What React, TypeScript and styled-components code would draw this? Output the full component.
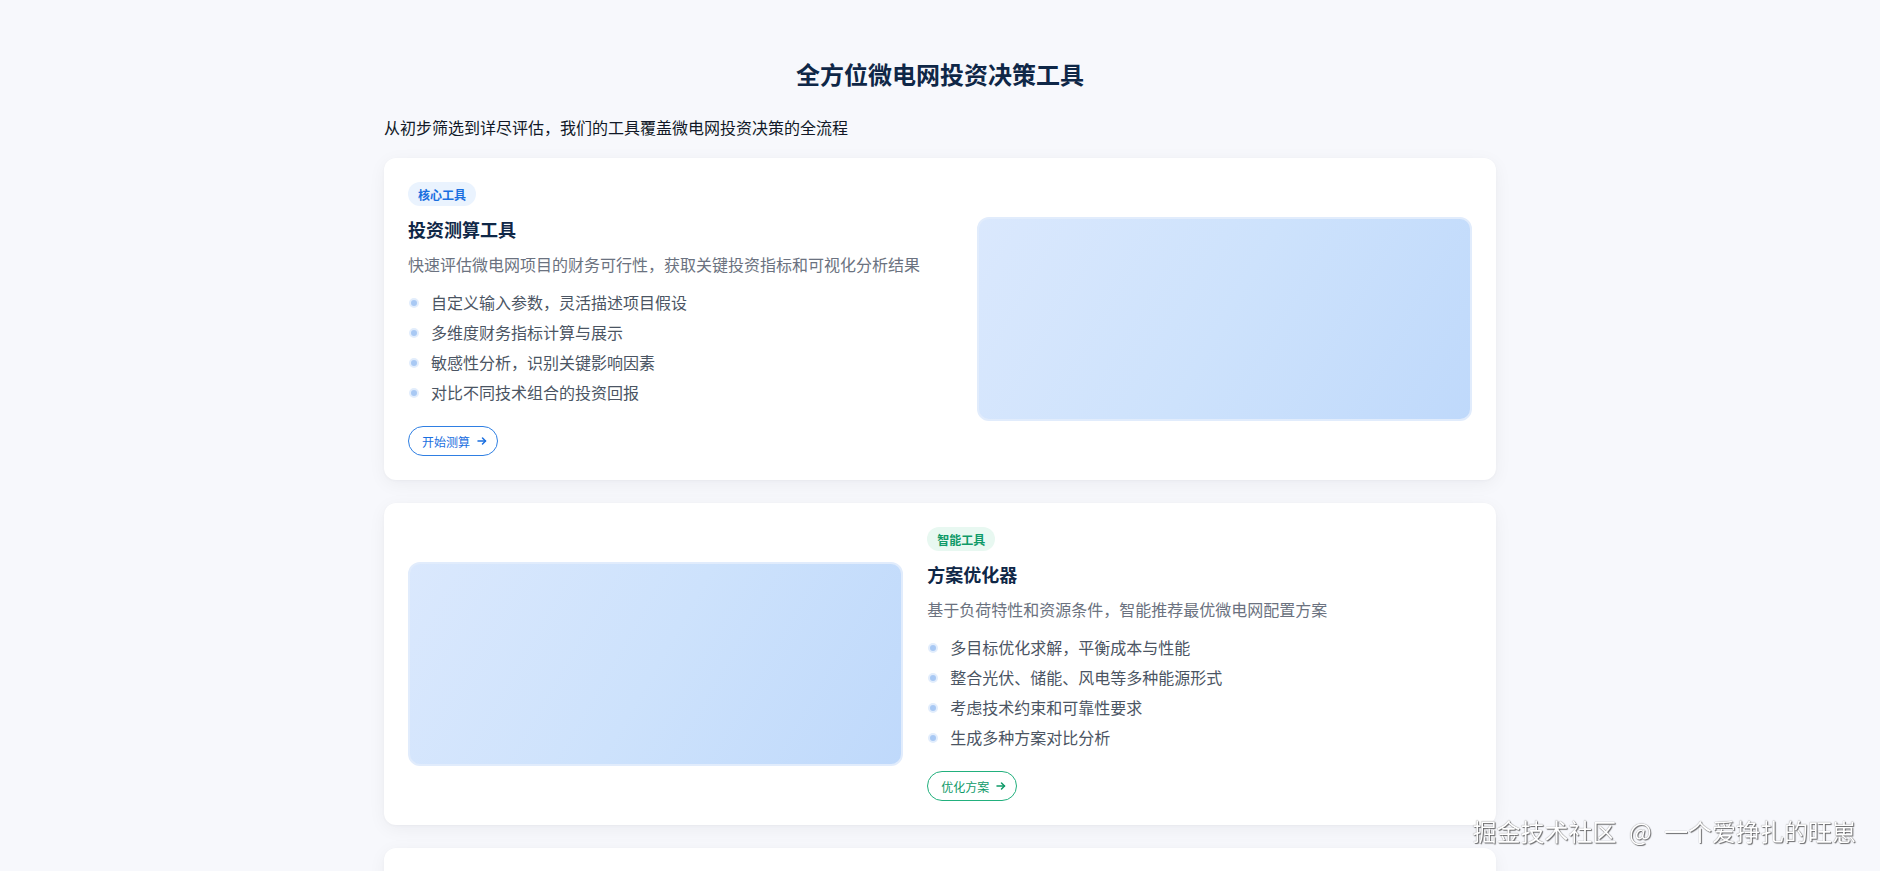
import React from "react";
import styled, { createGlobalStyle, css } from "styled-components";

const GlobalStyle = createGlobalStyle`
  html, body {
    margin: 0;
    padding: 0;
    overflow: hidden;
    background: #f7f8fc;
  }
  body {
    font-family: Inter, "Noto Sans CJK SC", "Noto Sans", sans-serif;
    color: #1f2937;
  }
  * { box-sizing: border-box; }
`;

type Tone = "blue" | "green";

const tones = {
  blue: { text: "#1a6fe0", bg: "#eaf3fe", border: "#2f7fe3" },
  green: { text: "#0f9a68", bg: "#e8f8f1", border: "#22b07d" },
};

const Page = styled.main`
  padding-top: 59px;
  min-height: 871px;
`;

const Container = styled.div`
  width: 1112px;
  margin: 0 auto;
`;

const Heading = styled.h2`
  margin: 0 0 23px;
  font-size: 24px;
  line-height: 34px;
  font-weight: 700;
  color: #0f2747;
  text-align: center;
`;

const Subtitle = styled.p`
  margin: 0 0 18px;
  font-size: 16px;
  line-height: 24px;
  color: #111827;
`;

const CardList = styled.div`
  display: flex;
  flex-direction: column;
  gap: 23px;
`;

const Card = styled.section<{ $reverse?: boolean }>`
  display: grid;
  grid-template-columns: ${(p) => (p.$reverse ? "1fr 1.1fr" : "1.1fr 1fr")};
  gap: 24px;
  align-items: center;
  padding: 24px;
  background: #ffffff;
  border-radius: 12px;
  box-shadow: 0 4px 18px rgba(15, 23, 42, 0.05), 0 1px 3px rgba(15, 23, 42, 0.03);
`;

const Content = styled.div`
  display: flex;
  flex-direction: column;
  align-items: flex-start;
`;

const Tag = styled.span<{ $tone: Tone }>`
  display: inline-flex;
  align-items: center;
  height: 24px;
  padding: 0 10px;
  border-radius: 999px;
  font-size: 12px;
  font-weight: 600;
  color: ${(p) => tones[p.$tone].text};
  background: ${(p) => tones[p.$tone].bg};
`;

const Title = styled.h3`
  margin: 12px 0 9px;
  font-size: 18px;
  line-height: 26px;
  font-weight: 700;
  color: #0f2747;
`;

const Desc = styled.p`
  margin: 0 0 14px;
  font-size: 16px;
  line-height: 24px;
  color: #6b7280;
`;

const FeatureList = styled.ul`
  margin: 0 0 21px;
  padding: 0;
  list-style: none;
  display: flex;
  flex-direction: column;
  gap: 6px;
`;

const Feature = styled.li`
  display: flex;
  align-items: center;
  gap: 12px;
  font-size: 16px;
  line-height: 24px;
  color: #4b5563;
`;

const Dot = styled.span`
  flex: none;
  width: 10px;
  height: 10px;
  margin-left: 1px;
  border-radius: 50%;
  background: #a9c9f4;
  border: 2px solid #e2edfc;
`;

const ActionButton = styled.button<{ $tone: Tone }>`
  display: inline-flex;
  align-items: center;
  gap: 6px;
  height: 30px;
  padding: 0 9px 0 13px;
  border-radius: 999px;
  background: #ffffff;
  font-family: inherit;
  font-size: 12px;
  cursor: pointer;
  ${(p) => css`
    color: ${tones[p.$tone].text};
    border: 1px solid ${tones[p.$tone].border};
  `}
`;

const Visual = styled.div`
  height: 204px;
  border-radius: 12px;
  border: 2px solid #e1ecfc;
  background: linear-gradient(120deg, #dae8fd 0%, #cde2fc 50%, #bfd9fb 100%);
`;

const Watermark = styled.div`
  position: fixed;
  right: 24px;
  bottom: 24px;
  font-size: 24px;
  line-height: 32px;
  word-spacing: 7px;
  color: #ffffff;
  font-family: "Noto Sans CJK SC", sans-serif;
  text-shadow: 1px 1px 1px rgba(0, 0, 0, 0.55), 0 0 1px rgba(0, 0, 0, 0.6);
  pointer-events: none;
`;

const Arrow = () => (
  <svg width="12" height="12" viewBox="0 0 24 24" fill="none" stroke="currentColor" strokeWidth="3" strokeLinecap="round" strokeLinejoin="round">
    <path d="M4 12h15" />
    <path d="M13 6l6 6-6 6" />
  </svg>
);

type Tool = {
  tag: string;
  tone: Tone;
  title: string;
  desc: string;
  features: string[];
  action: string;
  reverse?: boolean;
};

const tools: Tool[] = [
  {
    tag: "核心工具",
    tone: "blue",
    title: "投资测算工具",
    desc: "快速评估微电网项目的财务可行性，获取关键投资指标和可视化分析结果",
    features: [
      "自定义输入参数，灵活描述项目假设",
      "多维度财务指标计算与展示",
      "敏感性分析，识别关键影响因素",
      "对比不同技术组合的投资回报",
    ],
    action: "开始测算",
  },
  {
    tag: "智能工具",
    tone: "green",
    title: "方案优化器",
    desc: "基于负荷特性和资源条件，智能推荐最优微电网配置方案",
    features: [
      "多目标优化求解，平衡成本与性能",
      "整合光伏、储能、风电等多种能源形式",
      "考虑技术约束和可靠性要求",
      "生成多种方案对比分析",
    ],
    action: "优化方案",
    reverse: true,
  },
];

const ToolCard = ({ tool }: { tool: Tool }) => {
  const content = (
    <Content>
      <Tag $tone={tool.tone}>{tool.tag}</Tag>
      <Title>{tool.title}</Title>
      <Desc>{tool.desc}</Desc>
      <FeatureList>
        {tool.features.map((f) => (
          <Feature key={f}>
            <Dot />
            {f}
          </Feature>
        ))}
      </FeatureList>
      <ActionButton $tone={tool.tone}>
        {tool.action}
        <Arrow />
      </ActionButton>
    </Content>
  );
  return (
    <Card $reverse={tool.reverse}>
      {tool.reverse ? (
        <>
          <Visual />
          {content}
        </>
      ) : (
        <>
          {content}
          <Visual />
        </>
      )}
    </Card>
  );
};

export default function App() {
  return (
    <>
      <GlobalStyle />
      <Page>
        <Container>
          <Heading>全方位微电网投资决策工具</Heading>
          <Subtitle>从初步筛选到详尽评估，我们的工具覆盖微电网投资决策的全流程</Subtitle>
          <CardList>
            {tools.map((t) => (
              <ToolCard key={t.title} tool={t} />
            ))}
            <Card>
              <Content />
              <Visual />
            </Card>
          </CardList>
        </Container>
      </Page>
      <Watermark>掘金技术社区 @ 一个爱挣扎的旺崽</Watermark>
    </>
  );
}
